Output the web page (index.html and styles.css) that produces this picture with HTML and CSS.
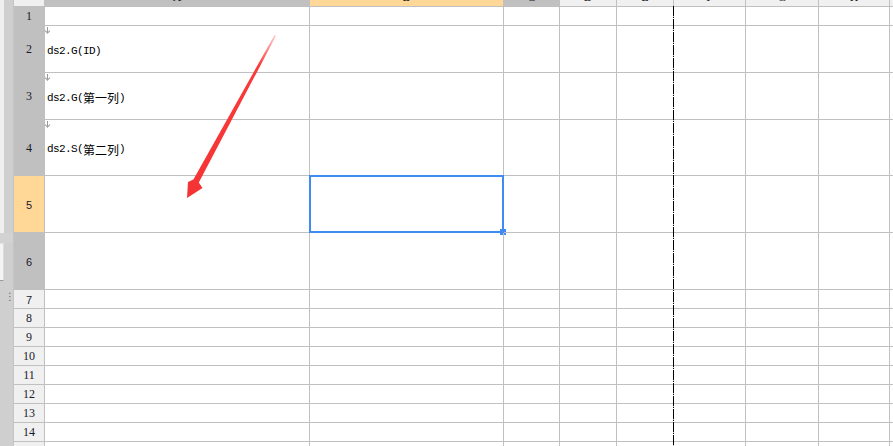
FILE: index.html
```html
<!DOCTYPE html>
<html lang="zh-CN">
<head>
<meta charset="UTF-8">
<title>报表设计</title>
<link rel="stylesheet" href="styles.css">
</head>
<body>

<aside class="side">
    <div class="side-top"></div>
    <div class="side-band"></div>
    <div class="side-box"></div>
    <div class="grip">⋮</div>
</aside>

<main class="sheet-wrap">
    <div class="sheet">
        <!-- 列头 -->
        <div class="ch corner"></div>
        <div class="ch sel"><span>A</span></div>
        <div class="ch cur"><span>B</span></div>
        <div class="ch sel"><span>C</span></div>
        <div class="ch"><span>D</span></div>
        <div class="ch"><span>E</span></div>
        <div class="ch"><span>F</span></div>
        <div class="ch"><span>G</span></div>
        <div class="ch"><span>H</span></div>
        <div class="ch"><span>I</span></div>

        <div class="rh sel">1</div>
        <div class="c"></div><div class="c"></div><div class="c"></div><div class="c"></div><div class="c"></div><div class="c"></div><div class="c"></div><div class="c"></div><div class="c"></div>

        <div class="rh sel">2</div>
        <div class="c cell-text"><i class="mark"></i>ds2.G(ID)</div>
        <div class="c"></div><div class="c"></div><div class="c"></div><div class="c"></div><div class="c"></div><div class="c"></div><div class="c"></div><div class="c"></div>

        <div class="rh sel">3</div>
        <div class="c cell-text"><i class="mark"></i>ds2.G(<span class="cjk">第一列</span>)</div>
        <div class="c"></div><div class="c"></div><div class="c"></div><div class="c"></div><div class="c"></div><div class="c"></div><div class="c"></div><div class="c"></div>

        <div class="rh sel">4</div>
        <div class="c cell-text"><i class="mark"></i>ds2.S(<span class="cjk">第二列</span>)</div>
        <div class="c"></div><div class="c"></div><div class="c"></div><div class="c"></div><div class="c"></div><div class="c"></div><div class="c"></div><div class="c"></div>

        <div class="rh cur sans">5</div>
        <div class="c"></div>
        <div class="c active"></div>
        <div class="c"></div><div class="c"></div><div class="c"></div><div class="c"></div><div class="c"></div><div class="c"></div><div class="c"></div>

        <div class="rh sel sans">6</div>
        <div class="c"></div><div class="c"></div><div class="c"></div><div class="c"></div><div class="c"></div><div class="c"></div><div class="c"></div><div class="c"></div><div class="c"></div>

        <div class="rh sans">7</div>
        <div class="c"></div><div class="c"></div><div class="c"></div><div class="c"></div><div class="c"></div><div class="c"></div><div class="c"></div><div class="c"></div><div class="c"></div>

        <div class="rh">8</div>
        <div class="c"></div><div class="c"></div><div class="c"></div><div class="c"></div><div class="c"></div><div class="c"></div><div class="c"></div><div class="c"></div><div class="c"></div>

        <div class="rh">9</div>
        <div class="c"></div><div class="c"></div><div class="c"></div><div class="c"></div><div class="c"></div><div class="c"></div><div class="c"></div><div class="c"></div><div class="c"></div>

        <div class="rh">10</div>
        <div class="c"></div><div class="c"></div><div class="c"></div><div class="c"></div><div class="c"></div><div class="c"></div><div class="c"></div><div class="c"></div><div class="c"></div>

        <div class="rh">11</div>
        <div class="c"></div><div class="c"></div><div class="c"></div><div class="c"></div><div class="c"></div><div class="c"></div><div class="c"></div><div class="c"></div><div class="c"></div>

        <div class="rh">12</div>
        <div class="c"></div><div class="c"></div><div class="c"></div><div class="c"></div><div class="c"></div><div class="c"></div><div class="c"></div><div class="c"></div><div class="c"></div>

        <div class="rh">13</div>
        <div class="c"></div><div class="c"></div><div class="c"></div><div class="c"></div><div class="c"></div><div class="c"></div><div class="c"></div><div class="c"></div><div class="c"></div>

        <div class="rh">14</div>
        <div class="c"></div><div class="c"></div><div class="c"></div><div class="c"></div><div class="c"></div><div class="c"></div><div class="c"></div><div class="c"></div><div class="c"></div>

        <div class="rh">15</div>
        <div class="c"></div><div class="c"></div><div class="c"></div><div class="c"></div><div class="c"></div><div class="c"></div><div class="c"></div><div class="c"></div><div class="c"></div>
    </div>

    <!-- 分页线 -->
    <div class="page-break"></div>
</main>

<!-- 标注箭头 -->
<svg class="annot" width="893" height="446" viewBox="0 0 893 446">
    <defs>
        <linearGradient id="fade" x1="275" y1="35" x2="187" y2="198" gradientUnits="userSpaceOnUse">
            <stop offset="0" stop-color="#ff4040" stop-opacity="0.25"/>
            <stop offset="0.18" stop-color="#fb3a3a"/>
            <stop offset="1" stop-color="#f43434"/>
        </linearGradient>
    </defs>
    <polygon fill="url(#fade)" points="274.5,35 276,35.8 198.8,182.6 202.5,188 187,198 188,182 193.4,179.6"/>
</svg>

</body>
</html>
```

FILE: styles.css
```css
html, body {
    margin: 0;
    padding: 0;
}
body {
    position: relative;
    width: 893px;
    height: 446px;
    overflow: hidden;
    display: flex;
    background: #fff;
    font-family: "Liberation Serif", "Noto Sans CJK SC", serif;
}

/* 左侧面板边缘 */
.side {
    position: relative;
    width: 14px;
    flex: none;
    background: #cfcfcf;
    border-right: 1px solid #c4c4c4;
    box-sizing: border-box;
}
.side-top {
    width: 4px;
    height: 233px;
    background: #efefef;
}
.side-band {
    height: 10px;
    background: #d2d2d2;
}
.side-box {
    width: 3px;
    height: 36px;
    background: #f4f4f4;
    border-top: 1px solid #e2e2e2;
    border-bottom: 1px solid #9a9a9a;
    border-right: 1px solid #dcdcdc;
}
.grip {
    position: absolute;
    left: 5px;
    top: 291px;
    font: 10px/12px "DejaVu Sans", sans-serif;
    color: #666;
}

/* 表格区域 */
.sheet-wrap {
    position: relative;
    flex: 1;
    overflow: hidden;
}
.sheet {
    display: grid;
    grid-template-columns: 31px 265px 194px 56px 57px 57px 72px 73px 71px 60px;
    grid-template-rows: 7px 19px 47px 47px 56px 57px 57px repeat(9, 19px);
}
.sheet > div {
    box-sizing: border-box;
    border-right: 1px solid #c0c0c0;
    border-bottom: 1px solid #c0c0c0;
}

/* 列头（上半部分被滚动遮住） */
.ch {
    background: #f0f0f0;
    overflow: hidden;
    display: flex;
    align-items: flex-end;
    justify-content: center;
    font-size: 12px;
    line-height: 12px;
    color: #111;
}
.ch span {
    margin-bottom: 3px;
}
.ch.sel {
    background: #c0c0c0;
}
.ch.cur {
    background: #ffd898;
}

/* 行头 */
.rh {
    background: #f0f0f0;
    display: flex;
    align-items: center;
    justify-content: center;
    font-size: 12px;
    color: #1a1a2a;
    padding-top: 1px;
}
.rh.sel {
    background: #c0c0c0;
}
.rh.cur {
    background: #ffd898;
}
.rh.sans {
    font-family: "Liberation Sans", sans-serif;
    font-size: 11px;
}

/* 单元格 */
.c {
    position: relative;
}
.cell-text {
    display: flex;
    align-items: center;
    padding: 3px 0 0 2px;
    font-family: "Liberation Mono", "Noto Sans CJK SC", monospace;
    font-size: 11px;
    letter-spacing: -0.6px;
    color: #000;
    white-space: nowrap;
}
.cjk {
    font-family: "Noto Sans CJK SC", sans-serif;
    font-size: 12px;
    letter-spacing: 0;
}
.mark {
    position: absolute;
    left: 0;
    top: 1px;
    width: 6px;
    height: 6px;
    background:
        linear-gradient(#9a9a9a, #9a9a9a) 2px 0 / 1px 5px no-repeat;
}
.mark::after {
    content: "";
    position: absolute;
    left: 0;
    top: 2px;
    width: 3px;
    height: 3px;
    border-right: 1px solid #9a9a9a;
    border-bottom: 1px solid #9a9a9a;
    transform: translateX(0.5px) rotate(45deg);
}

/* 选中单元格 */
.active::before {
    content: "";
    position: absolute;
    top: -1px;
    left: -1px;
    right: -1px;
    bottom: -1px;
    border: 2px solid #3d8bf3;
}
.active::after {
    content: "";
    position: absolute;
    right: -3px;
    bottom: -3px;
    width: 6px;
    height: 6px;
    background: #3d8bf3;
}

/* 分页线 */
.page-break {
    position: absolute;
    left: 659px;
    top: 6px;
    bottom: 0;
    width: 1px;
    background: repeating-linear-gradient(to bottom, #000 0 10px, #bdbdbd 10px 11px, #000 11px 12px, #fff 12px 13px);
}

.annot {
    position: absolute;
    left: 0;
    top: 0;
    pointer-events: none;
}
```
